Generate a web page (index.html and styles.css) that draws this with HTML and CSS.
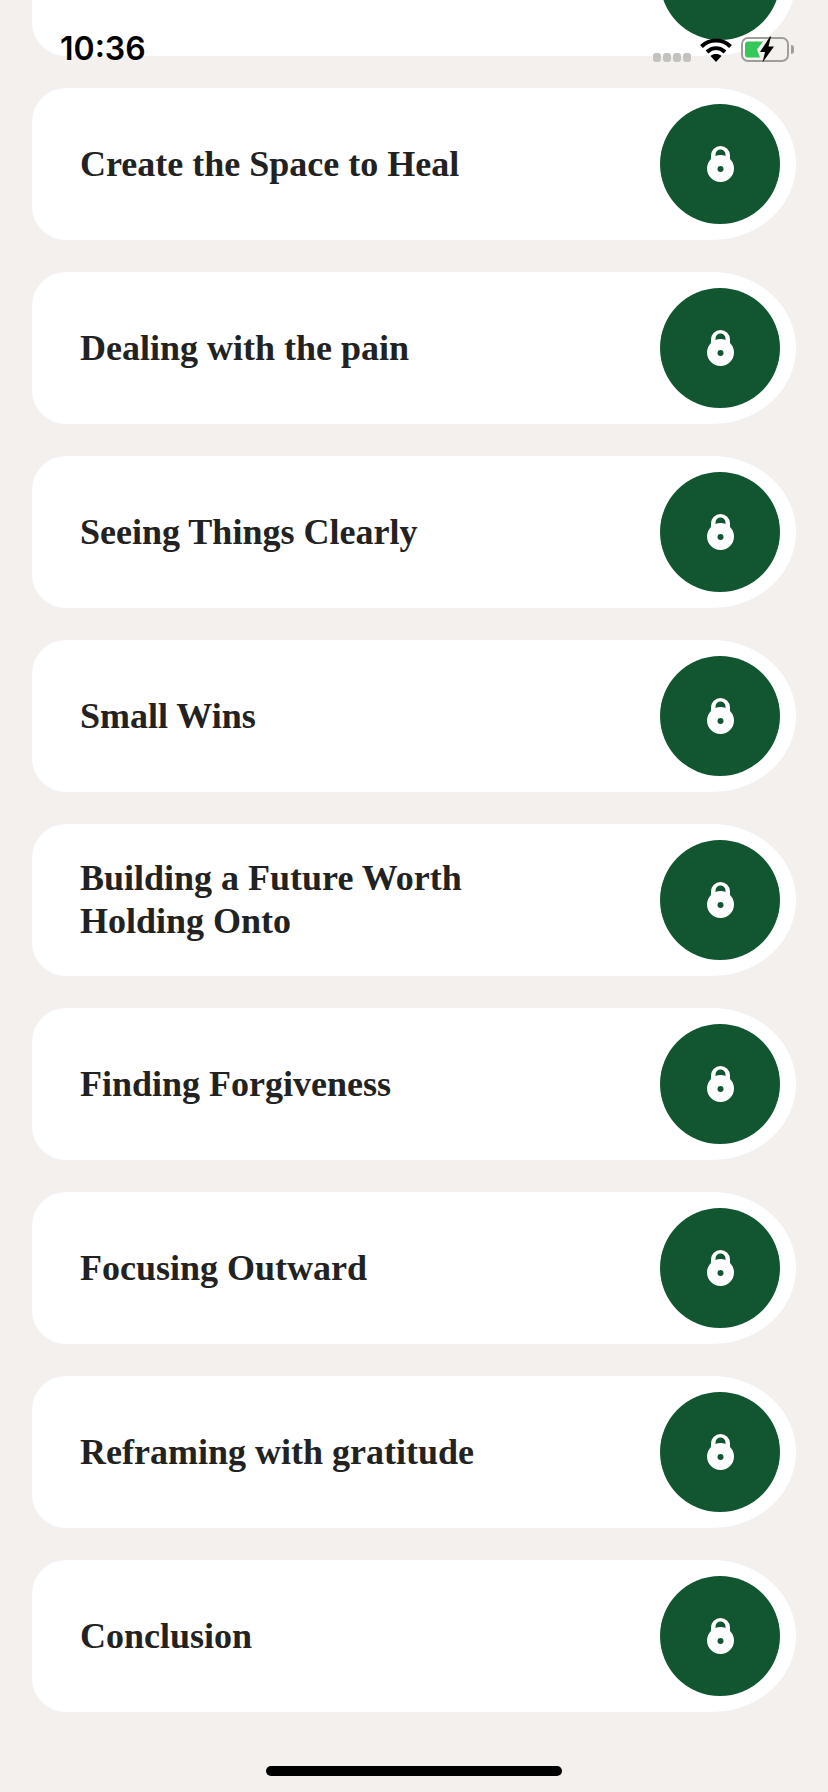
FILE: index.html
```html
<!DOCTYPE html>
<html lang="en">
<head>
<meta charset="utf-8">
<title>Lessons</title>
<link rel="stylesheet" href="styles.css">
</head>
<body>
<svg class="defs" width="0" height="0" aria-hidden="true">
  <symbol id="lock" viewBox="0 0 27 36">
    <path fill="#fff" fill-rule="evenodd" d="M4 14V9.500a9.500 9.500 0 0 1 19 0V14zM8.500 14h10V8.500a5 5 0 0 0-10 0z"/>
    <path fill="#fff" fill-rule="evenodd" d="M13.500 9a13.500 13.500 0 1 1 0 27 13.500 13.500 0 0 1 0-27zM13.500 20a3 3 0 1 0 0 6 3 3 0 0 0 0-6z"/>
  </symbol>
</svg>

<div class="status">
  <span class="time">10:36</span>
  <div class="status-icons">
    <div class="signal"><i></i><i></i><i></i><i></i></div>
    <svg class="wifi" viewBox="0 0 32 25"><path d="M1.500 9.500C9.500 1.500 22.500 1.500 30.500 9.500" fill="none" stroke="#000" stroke-width="4"/><path d="M7 15C12.500 10 19.500 10 25 15" fill="none" stroke="#000" stroke-width="4"/><path d="M16 25l-5.500-6c3.200-2.600 7.800-2.600 11 0z" fill="#000"/></svg>
    <div class="battery"></div>
    <svg class="battery-fill" viewBox="0 0 18 16"><path d="M3 0H18L12 8 15 16H3Q0 16 0 13V3Q0 0 3 0z" fill="#34c759"/></svg>
    <div class="battery-tip"></div>
    <svg class="bolt" viewBox="0 0 14 26"><path d="M10 0L0 15.500h5L2.500 26 14 10h-5.500L11 0z" fill="#000"/></svg>
  </div>
</div>

<main class="list">
  <article class="card"><h2 class="title"></h2><div class="btn"><svg class="lock"><use href="#lock"/></svg></div></article>
  <article class="card"><h2 class="title">Create the Space to Heal</h2><div class="btn"><svg class="lock"><use href="#lock"/></svg></div></article>
  <article class="card"><h2 class="title">Dealing with the pain</h2><div class="btn"><svg class="lock"><use href="#lock"/></svg></div></article>
  <article class="card"><h2 class="title">Seeing Things Clearly</h2><div class="btn"><svg class="lock"><use href="#lock"/></svg></div></article>
  <article class="card"><h2 class="title">Small Wins</h2><div class="btn"><svg class="lock"><use href="#lock"/></svg></div></article>
  <article class="card"><h2 class="title">Building a Future Worth<br>Holding Onto</h2><div class="btn"><svg class="lock"><use href="#lock"/></svg></div></article>
  <article class="card"><h2 class="title">Finding Forgiveness</h2><div class="btn"><svg class="lock"><use href="#lock"/></svg></div></article>
  <article class="card"><h2 class="title">Focusing Outward</h2><div class="btn"><svg class="lock"><use href="#lock"/></svg></div></article>
  <article class="card"><h2 class="title">Reframing with gratitude</h2><div class="btn"><svg class="lock"><use href="#lock"/></svg></div></article>
  <article class="card"><h2 class="title">Conclusion</h2><div class="btn"><svg class="lock"><use href="#lock"/></svg></div></article>
</main>

<div class="home-bar"></div>
</body>
</html>
```
FILE: styles.css
```css
* { box-sizing: border-box; }
html, body { margin: 0; padding: 0; }
body {
  width: 828px;
  height: 1792px;
  background: #f3f0ed;
  overflow: hidden;
  position: relative;
  font-family: "Liberation Serif", serif;
}
.defs { position: absolute; }
.list {
  display: flex;
  flex-direction: column;
  gap: 32px;
  margin: -96px 32px 0;
}
.card {
  height: 152px;
  background: #fff;
  border-radius: 34px 84px 84px 34px / 34px 76px 76px 34px;
  padding: 16px 16px 16px 48px;
  display: flex;
  align-items: center;
  justify-content: space-between;
}
.title {
  margin: 0;
  font-size: 36px;
  line-height: 43px;
  font-weight: 700;
  color: #222;
}
.btn {
  width: 120px;
  height: 120px;
  border-radius: 50%;
  background: #115631;
  display: flex;
  align-items: center;
  justify-content: center;
  flex: none;
}
.lock { width: 27px; height: 36px; }
.status {
  position: absolute;
  top: 0;
  left: 0;
  width: 828px;
  height: 70px;
}
.time {
  position: absolute;
  left: 60px;
  top: 29px;
  font-family: Inter, "Liberation Sans", sans-serif;
  font-size: 32px;
  line-height: 40px;
  font-weight: 600;
  color: #000;
}
.status-icons { position: absolute; inset: 0; }
.signal { position: absolute; left: 653px; top: 53px; display: flex; gap: 2px; }
.signal i { width: 8px; height: 9px; border-radius: 3px; background: #c4c2bf; }
.wifi { position: absolute; left: 700px; top: 37px; width: 32px; height: 25px; }
.battery {
  position: absolute; left: 741px; top: 37px; width: 48px; height: 25px;
  border: 2px solid #a09e9b; border-radius: 7px;
}
.battery-fill { position: absolute; left: 745px; top: 41px; width: 18px; height: 17px; }
.battery-tip { position: absolute; left: 791px; top: 45px; width: 3px; height: 9px; background: #a09e9b; border-radius: 0 3px 3px 0; }
.bolt { position: absolute; left: 760px; top: 36px; width: 14px; height: 27px; }
.home-bar {
  position: absolute;
  left: 266px;
  top: 1766px;
  width: 296px;
  height: 10px;
  border-radius: 5px;
  background: #000;
}
```
